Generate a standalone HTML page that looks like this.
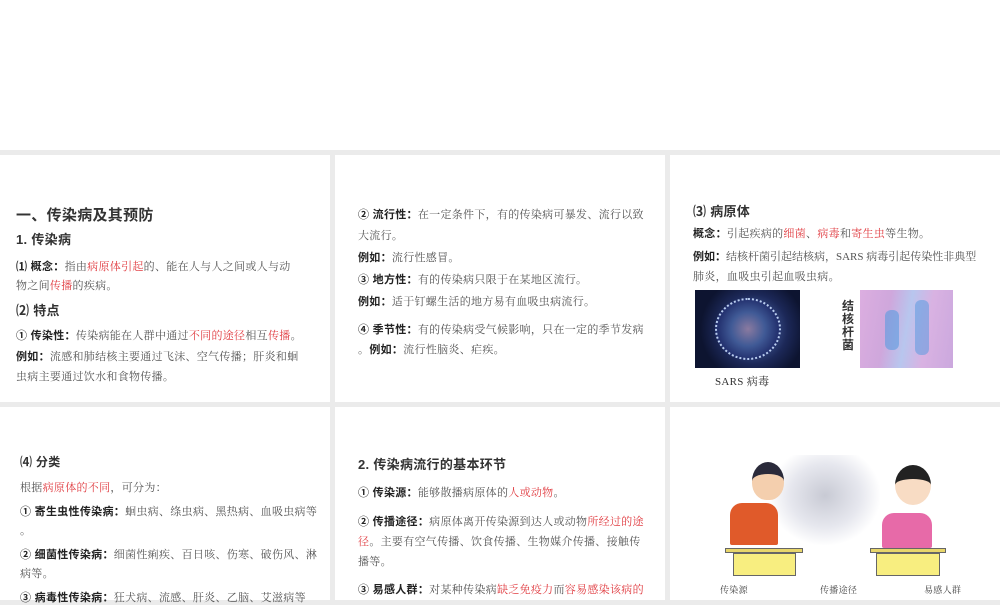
<!DOCTYPE html>
<html><head><meta charset="utf-8"><style>
*{margin:0;padding:0;box-sizing:border-box}
body{width:1000px;height:600px;overflow:hidden;background:#ebebeb;position:relative;font-family:"Liberation Serif","Noto Serif CJK SC","Noto Sans CJK SC",serif;color:#555}
.top{position:absolute;left:0;top:0;width:1000px;height:150px;background:#fff}
.p{position:absolute;background:#fff;overflow:hidden}
.l{position:absolute;white-space:nowrap;font-size:11px;line-height:14px;letter-spacing:0.3px}
b{color:#222;font-family:"Liberation Sans","Noto Sans CJK SC",sans-serif;font-weight:bold}
.r{color:#e0393e}
.h{font-family:"Liberation Sans","Noto Sans CJK SC",sans-serif;color:#333;font-weight:bold}
</style></head><body>
<div class="top"></div>
<div class="p" style="left:0;top:155px;width:330px;height:247px"></div>
<div class="p" style="left:335px;top:155px;width:330px;height:247px"></div>
<div class="p" style="left:670px;top:155px;width:330px;height:247px"></div>
<div class="p" style="left:0;top:407px;width:330px;height:193px"></div>
<div class="p" style="left:335px;top:407px;width:330px;height:193px"></div>
<div class="p" style="left:670px;top:407px;width:330px;height:193px"></div>

<!-- panel 1 -->
<div class="l h" style="left:16px;top:207px;font-size:15px;line-height:18px">一、传染病及其预防</div>
<div class="l h" style="left:16px;top:232px;font-size:13px;line-height:16px">1. 传染病</div>
<div class="l" style="left:16px;top:260px"><b>⑴ 概念：</b>指由<span class="r">病原体引起</span>的、能在人与人之间或人与动</div>
<div class="l" style="left:16px;top:279px">物之间<span class="r">传播</span>的疾病。</div>
<div class="l h" style="left:16px;top:303px;font-size:13px;line-height:16px">⑵ 特点</div>
<div class="l" style="left:16px;top:329px"><b>① 传染性：</b>传染病能在人群中通过<span class="r">不同的途径</span>相互<span class="r">传播</span>。</div>
<div class="l" style="left:16px;top:350px"><b>例如：</b>流感和肺结核主要通过飞沫、空气传播；肝炎和蛔</div>
<div class="l" style="left:16px;top:370px">虫病主要通过饮水和食物传播。</div>

<!-- panel 2 -->
<div class="l" style="left:358px;top:208px"><b>② 流行性：</b>在一定条件下，有的传染病可暴发、流行以致</div>
<div class="l" style="left:358px;top:229px">大流行。</div>
<div class="l" style="left:358px;top:251px"><b>例如：</b>流行性感冒。</div>
<div class="l" style="left:358px;top:273px"><b>③ 地方性：</b>有的传染病只限于在某地区流行。</div>
<div class="l" style="left:358px;top:295px"><b>例如：</b>适于钉螺生活的地方易有血吸虫病流行。</div>
<div class="l" style="left:358px;top:323px"><b>④ 季节性：</b>有的传染病受气候影响，只在一定的季节发病</div>
<div class="l" style="left:358px;top:343px">。<b>例如：</b>流行性脑炎、疟疾。</div>

<!-- panel 3 -->
<div class="l h" style="left:693px;top:204px;font-size:13px;line-height:16px">⑶ 病原体</div>
<div class="l" style="left:693px;top:227px"><b>概念：</b>引起疾病的<span class="r">细菌</span>、<span class="r">病毒</span>和<span class="r">寄生虫</span>等生物。</div>
<div class="l" style="left:693px;top:250px;letter-spacing:0"><b>例如：</b>结核杆菌引起结核病，SARS 病毒引起传染性非典型</div>
<div class="l" style="left:693px;top:270px">肺炎，血吸虫引起血吸虫病。</div>
<div style="position:absolute;left:695px;top:290px;width:105px;height:78px;background:radial-gradient(circle at 55% 50%,#6a86b8 0,#3a4f8a 28%,#1c2858 50%,#0d1430 75%)">
<div style="position:absolute;left:20px;top:8px;width:66px;height:62px;border-radius:50%;border:2px dotted #b9cdef;background:radial-gradient(circle,#8a7aa0 0,#405a96 40%,#243270 70%)"></div></div>
<div style="position:absolute;left:860px;top:290px;width:93px;height:78px;background:linear-gradient(100deg,#dcaee0,#cfa7dc 30%,#b8c6ee 50%,#d9b2e2 70%,#cba8de)">
<div style="position:absolute;left:25px;top:20px;width:14px;height:40px;background:#5a9be0;opacity:.6;border-radius:6px"></div>
<div style="position:absolute;left:55px;top:10px;width:14px;height:55px;background:#5a9be0;opacity:.55;border-radius:6px"></div></div>
<div class="l h" style="left:842px;top:300px;font-size:12px;line-height:13px;white-space:normal;width:12px">结核杆菌</div>
<div class="l" style="left:715px;top:375px;color:#333">SARS 病毒</div>

<!-- panel 4 -->
<div class="l h" style="left:20px;top:455px;font-size:12px;line-height:15px">⑷ 分类</div>
<div class="l" style="left:20px;top:481px">根据<span class="r">病原体的不同</span>，可分为：</div>
<div class="l" style="left:20px;top:505px"><b>① 寄生虫性传染病：</b>蛔虫病、绦虫病、黑热病、血吸虫病等</div>
<div class="l" style="left:20px;top:524px">。</div>
<div class="l" style="left:20px;top:548px"><b>② 细菌性传染病：</b>细菌性痢疾、百日咳、伤寒、破伤风、淋</div>
<div class="l" style="left:20px;top:567px">病等。</div>
<div class="l" style="left:20px;top:591px"><b>③ 病毒性传染病：</b>狂犬病、流感、肝炎、乙脑、艾滋病等</div>

<!-- panel 5 -->
<div class="l h" style="left:358px;top:457px;font-size:13px;line-height:16px">2. 传染病流行的基本环节</div>
<div class="l" style="left:358px;top:486px"><b>① 传染源：</b>能够散播病原体的<span class="r">人或动物</span>。</div>
<div class="l" style="left:358px;top:515px"><b>② 传播途径：</b>病原体离开传染源到达人或动物<span class="r">所经过的途</span></div>
<div class="l" style="left:358px;top:535px"><span class="r">径</span>。主要有空气传播、饮食传播、生物媒介传播、接触传</div>
<div class="l" style="left:358px;top:555px">播等。</div>
<div class="l" style="left:358px;top:583px"><b>③ 易感人群：</b>对某种传染病<span class="r">缺乏免疫力</span>而<span class="r">容易感染该病的</span></div>

<!-- panel 6 illustration -->
<div style="position:absolute;left:770px;top:455px;width:110px;height:90px;background:radial-gradient(ellipse at 50% 45%,#c8cad4 0,#e6e7ee 45%,rgba(255,255,255,0) 72%)"></div>
<div style="position:absolute;left:752px;top:462px;width:32px;height:38px;border-radius:50% 50% 45% 45%;background:#f4cfae;border-top:12px solid #2a2a3a"></div>
<div style="position:absolute;left:730px;top:503px;width:48px;height:42px;background:#e05a2a;border-radius:12px 12px 2px 2px"></div>
<div style="position:absolute;left:725px;top:548px;width:78px;height:5px;background:#e8d66a;border:1px solid #666"></div>
<div style="position:absolute;left:733px;top:553px;width:63px;height:23px;background:#f8ee80;border:1px solid #666"></div>
<div style="position:absolute;left:895px;top:465px;width:36px;height:40px;border-radius:50%;background:#f8dcc4;border-top:14px solid #222"></div>
<div style="position:absolute;left:882px;top:513px;width:50px;height:35px;background:#e76aa8;border-radius:12px 12px 2px 2px"></div>
<div style="position:absolute;left:870px;top:548px;width:76px;height:5px;background:#e8d66a;border:1px solid #666"></div>
<div style="position:absolute;left:876px;top:553px;width:64px;height:23px;background:#f8ee80;border:1px solid #666"></div>
<div class="l" style="left:720px;top:583px;font-size:9px;color:#444">传染源</div>
<div class="l" style="left:820px;top:583px;font-size:9px;color:#444">传播途径</div>
<div class="l" style="left:924px;top:583px;font-size:9px;color:#444">易感人群</div>
</body></html>
